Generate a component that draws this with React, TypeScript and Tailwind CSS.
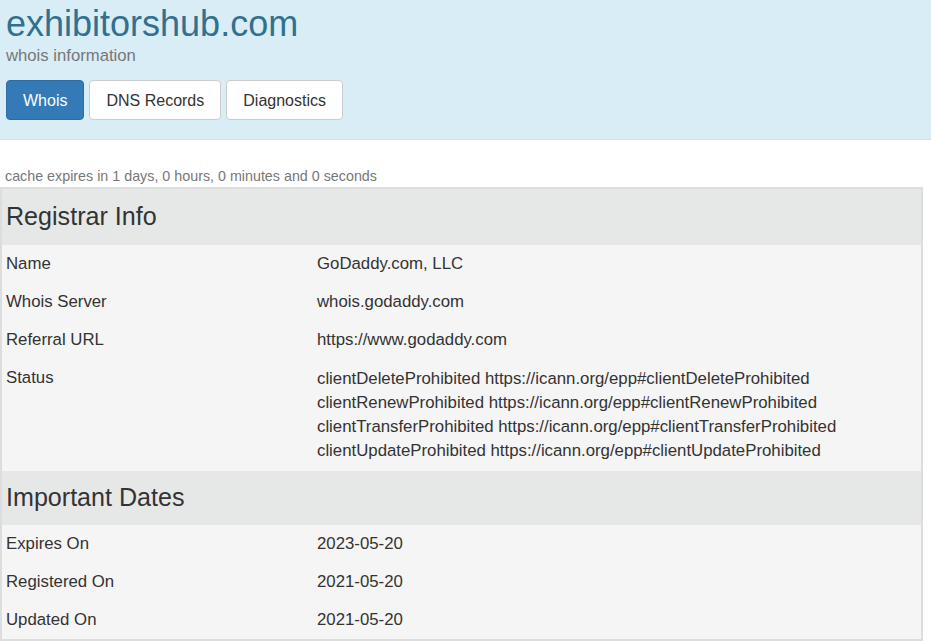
export default function App() {
  const registrar: [string, string[]][] = [
    ["Name", ["GoDaddy.com, LLC"]],
    ["Whois Server", ["whois.godaddy.com"]],
    ["Referral URL", ["https://www.godaddy.com"]],
    [
      "Status",
      [
        "clientDeleteProhibited https://icann.org/epp#clientDeleteProhibited",
        "clientRenewProhibited https://icann.org/epp#clientRenewProhibited",
        "clientTransferProhibited https://icann.org/epp#clientTransferProhibited",
        "clientUpdateProhibited https://icann.org/epp#clientUpdateProhibited",
      ],
    ],
  ];
  const dates: [string, string[]][] = [
    ["Expires On", ["2023-05-20"]],
    ["Registered On", ["2021-05-20"]],
    ["Updated On", ["2021-05-20"]],
  ];

  const section = (title: string, rows: [string, string[]][], head: string) => (
    <>
      <div className={`flex items-center bg-[#e6e8e7] px-[4px] text-[25.1px] text-[#333] ${head}`}>{title}</div>
      {rows.map(([label, values]) => (
        <div key={label} className="grid grid-cols-[311px_1fr] bg-[#f5f5f5] text-[16.8px] text-[#333]">
          <div className="px-[4px] py-2 leading-[22px]">{label}</div>
          <div className="px-[4px] py-2">
            {values.map((v) => (
              <div key={v} className={values.length > 1 ? "leading-6" : "leading-[22px]"}>
                {v}
              </div>
            ))}
          </div>
        </div>
      ))}
    </>
  );

  return (
    <div className="min-h-screen bg-white font-['Liberation_Sans',Arial,sans-serif]">
      <div className="h-[140px] border-b border-[#c9e4f0] bg-[#d9edf7] px-[6px] pt-[4px]">
        <h1 className="text-[36px] leading-[40px] text-[#31708f]">exhibitorshub.com</h1>
        <div className="mt-[2px] text-[16.7px] leading-5 text-[#777]">whois information</div>
        <div className="mt-[14px] flex gap-[5px]">
          <button className="h-[40px] rounded border border-[#2e6da4] bg-[#337ab7] px-4 pt-px text-[16px] text-white">
            Whois
          </button>
          <button className="h-[40px] rounded border border-[#ccc] bg-white px-4 pt-px text-[16px] text-[#333]">
            DNS Records
          </button>
          <button className="h-[40px] rounded border border-[#ccc] bg-white px-4 pt-px text-[16px] text-[#333]">
            Diagnostics
          </button>
        </div>
      </div>
      <div className="px-[5px] pt-[28px] pb-[3px] text-[14.3px] leading-4 text-[#777]">
        cache expires in 1 days, 0 hours, 0 minutes and 0 seconds
      </div>
      <div className="w-[923px] border-2 border-[#ddd] bg-white">
        {section("Registrar Info", registrar, "h-[56px]")}
        {section("Important Dates", dates, "h-[54px]")}
      </div>
    </div>
  );
}
